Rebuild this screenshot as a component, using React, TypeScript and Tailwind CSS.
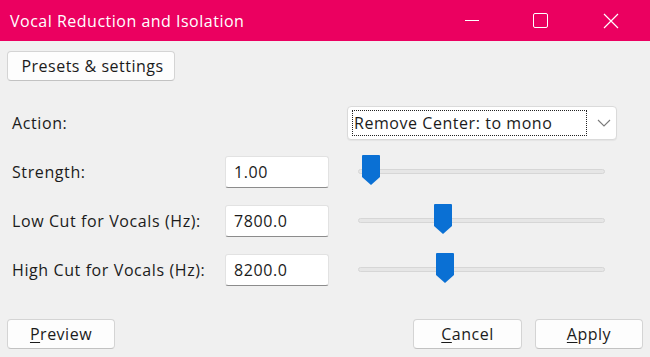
const rows = [
  { label: "Strength:", value: "1.00", thumb: 4 },
  { label: "Low Cut for Vocals (Hz):", value: "7800.0", thumb: 76 },
  { label: "High Cut for Vocals (Hz):", value: "8200.0", thumb: 78 },
];

function Slider({ thumb }: { thumb: number }) {
  return (
    <div className="relative ml-[29px] flex h-[30px] w-[247px] items-center">
      <div className="h-[5px] w-full rounded-full border border-[#d6d6d6] bg-[#e6e6e6]" />
      <svg
        className="absolute top-[-2px]"
        style={{ left: thumb }}
        width="18"
        height="30"
        viewBox="0 0 18 30"
      >
        <path d="M1 0 H17 a1 1 0 0 1 1 1 V22 L9 30 L0 22 V1 a1 1 0 0 1 1 -1 Z" fill="#0a70d4" />
      </svg>
    </div>
  );
}

function Button({ children, className }: { children: React.ReactNode; className?: string }) {
  return (
    <button
      className={
        "flex h-[30px] items-center justify-center rounded-[4px] border border-[#d4d4d4] border-b-[#c2c2c2] bg-[#fdfdfd] text-[16px] tracking-[0.5px] text-[#1b1b1b] " +
        (className ?? "")
      }
    >
      {children}
    </button>
  );
}

export default function App() {
  return (
    <div
      className="flex h-[357px] w-[650px] flex-col bg-[#f0f0f0] text-[#1b1b1b]"
      style={{ fontFamily: '"Open Sans", "Noto Sans", sans-serif' }}
    >
      <div className="flex h-[41px] items-center bg-[#eb0060] text-white">
        <span className="pl-[10px] text-[16px] tracking-[0.5px]">Vocal Reduction and Isolation</span>
        <div className="ml-auto flex h-full items-center">
          <div className="flex w-[72px] justify-center">
            <div className="h-px w-[14px] bg-white" />
          </div>
          <div className="flex w-[64px] justify-center">
            <div className="h-[15px] w-[15px] rounded-[2px] border border-white" />
          </div>
          <div className="flex w-[78px] justify-center">
            <svg width="16" height="16" viewBox="0 0 16 16">
              <path d="M1 1 L15 15 M15 1 L1 15" stroke="white" strokeWidth="1.2" />
            </svg>
          </div>
        </div>
      </div>

      <div className="flex px-[7px] pt-[10px]">
        <Button className="h-[29px] w-[168px] pl-[3px]">Presets &amp; settings</Button>
      </div>

      <div className="mt-[17px] flex flex-col pl-3 pr-[33px] text-[16px] tracking-[0.6px]">
        <div className="flex h-[49px] items-center">
          <span className="flex-1">Action:</span>
          <div className="flex h-[34px] w-[270px] items-center rounded-[4px] border border-[#dadada] bg-white pl-[4px] shadow-[0_1px_1px_rgba(0,0,0,0.05)]">
            <div className="flex h-[26px] w-[235px] items-center border border-dotted border-[#222] pl-[1px] tracking-[0.55px]">
              Remove Center: to mono
            </div>
            <svg className="ml-[10px]" width="14" height="8" viewBox="0 0 14 8">
              <path d="M1 1 L7 7 L13 1" fill="none" stroke="#7a7a7a" strokeWidth="1.1" />
            </svg>
          </div>
        </div>
        {rows.map((r) => (
          <div key={r.label} className="flex h-[49px] items-center">
            <span className="w-[213px]">{r.label}</span>
            <div className="flex h-[32px] w-[104px] items-center rounded-[3px] border border-[#e2e2e2] border-b-[#8c8c8c] bg-white pl-[8px]">
              {r.value}
            </div>
            <Slider thumb={r.thumb} />
          </div>
        ))}
      </div>

      <div className="mt-[25px] flex items-center px-[7px]">
        <Button className="w-[108px]">
          <span className="underline underline-offset-2">P</span>review
        </Button>
        <Button className="ml-auto w-[109px]">
          <span className="underline underline-offset-2">C</span>ancel
        </Button>
        <Button className="ml-[13px] w-[108px]">
          <span className="underline underline-offset-2">A</span>pply
        </Button>
      </div>
    </div>
  );
}
